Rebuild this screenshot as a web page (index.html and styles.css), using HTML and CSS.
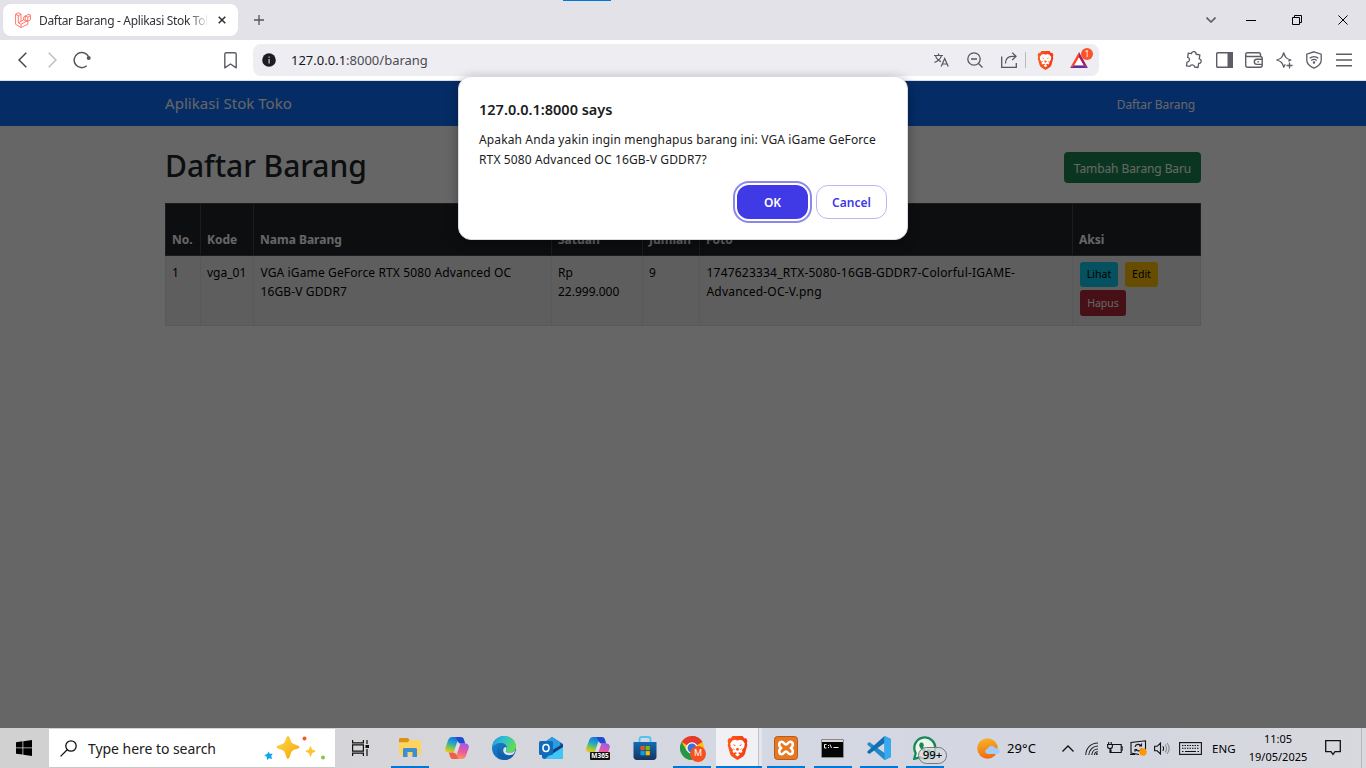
FILE: index.html
```html
<!DOCTYPE html>
<html lang="id">
<head>
<meta charset="utf-8">
<title>Daftar Barang - Aplikasi Stok Toko</title>
<link rel="stylesheet" href="styles.css">
</head>
<body>
<svg class="defs" width="0" height="0">
  <defs>
    <linearGradient id="lion" x1="0" x2="1"><stop offset="0" stop-color="#ff5a1f"/><stop offset="1" stop-color="#f43a10"/></linearGradient>
    <linearGradient id="cpL" x1="0.6" y1="0" x2="0.3" y2="1"><stop offset="0" stop-color="#1b6fe0"/><stop offset=".4" stop-color="#20a5c8"/><stop offset=".7" stop-color="#7fc64b"/><stop offset="1" stop-color="#f3c71c"/></linearGradient>
    <linearGradient id="cpR" x1="0.6" y1="0" x2="0.3" y2="1"><stop offset="0" stop-color="#a657e8"/><stop offset=".5" stop-color="#ee5a9a"/><stop offset="1" stop-color="#ff9a55"/></linearGradient>
    <linearGradient id="edgeA" x1="0" y1="0" x2="1" y2=".4"><stop offset="0" stop-color="#2397dd"/><stop offset=".5" stop-color="#2fc0d0"/><stop offset="1" stop-color="#62dc54"/></linearGradient>
    <linearGradient id="edgeB" x1="0" y1="0" x2="1" y2="1"><stop offset="0" stop-color="#1b8fdc"/><stop offset="1" stop-color="#0c4a94"/></linearGradient>
    <linearGradient id="sun" x1=".3" y1="0" x2=".5" y2="1"><stop offset="0" stop-color="#f6b52b"/><stop offset="1" stop-color="#ee6a10"/></linearGradient>
    <linearGradient id="gold" x1="0" y1="0" x2="1" y2="1"><stop offset="0" stop-color="#ffd84a"/><stop offset="1" stop-color="#f2a60c"/></linearGradient>
    <linearGradient id="store" x1="0" y1="0" x2="0" y2="1"><stop offset="0" stop-color="#0f6cb4"/><stop offset="1" stop-color="#17345f"/></linearGradient>
    <symbol id="braveLion" viewBox="0 0 20 24">
      <path fill="url(#lion)" d="M5 0h10l2 2.400 1.600-.3L20 5l-.7 2 .5 2-2.400 9c-.3 1-1 1.800-1.800 2.400L10 24l-5.600-3.600C3.600 19.800 2.900 19 2.600 18L.2 9l.5-2L0 5l1.400-2.900L3 2.400z"/>
      <path fill="#fff" d="M10 4.600l2.600-.8 2.500.8 2.300 3.200-.6 1.600.2 1.400-2.500 3.300.4 1.700-1.300 1.200-1.800-.8-1.300 1 1.900 1.400L10 20.600l-2.400-2 1.900-1.400-1.300-1-1.800.8-1.300-1.200.4-1.700L3 10.800l.2-1.400-.6-1.600 2.300-3.200 2.500-.8z"/>
      <path fill="#fb5420" d="M5 8.300l3 .7-.5 1.200zM15 8.300l-3 .7.5 1.200zM9 12h2l.5 2L10 14.700 8.500 14zM5.500 12l1.700 1.200-.6 1zM14.500 12l-1.700 1.200.6 1z"/>
    </symbol>
    <symbol id="copilot" viewBox="0 0 24 22">
      <path fill="url(#cpL)" d="M7.500 0h8.300l-3.500 4.500-3.700 11H3.500C1 15.500-.3 13.500.3 11L3 3.500C3.800 1 5.200 0 7.500 0z"/>
      <path fill="url(#cpR)" d="M16.500 22H8.200l3.500-4.500 3.700-11h5.100c2.500 0 3.800 2 3.200 4.500L21 18.500c-.8 2.500-2.200 3.500-4.500 3.500z"/>
      <path fill="#204bd0" d="M10.500 0h5.300c1.600 0 2.600.8 3.100 2.300l1.300 4.200h-3.800c-2-.1-3-.8-3.700-2.100C11.900 2.900 11.600 1.200 10.500 0z"/>
      <path fill="#ee6046" d="M13.500 22H8.200c-1.600 0-2.600-.8-3.100-2.300l-1.300-4.200h3.800c2 .1 3 .8 3.700 2.100.8 1.500 1.100 3.200 2.200 4.400z"/>
      <path fill="#e1dee8" d="M12 7.500h2.700l-2.400 7H9.700z"/>
    </symbol>
  </defs>
</svg>

<header class="tabstrip">
  <div class="tab">
    <svg class="laravel" viewBox="0 0 16 16" fill="none" stroke="#ff6a5e" stroke-width=".9" stroke-linejoin="round"><path d="M.6 2.200L3.300.7 6 2.200v7.100l2.600-1.500V5.200l2.700-1.500L14 2.200l1.500 1v4.600L12.800 9.300v3L6 15.500l-5.400-3.200zM.6 2.200l2.700 1.500L6 2.200M3.300 3.700v7.100L6 12.300l6.800-3.800M6 12.300v3.200M3.300 10.800L6 9.300M10.200 3.700l2.600 1.500 2.700-1.700M12.800 5.200v4.100L10.200 7.700v-4M8.600 7.800l2.700 1.500"/></svg>
    <span class="tab-title">Daftar Barang - Aplikasi Stok Toko</span>
    <svg class="tab-close" viewBox="0 0 8 8" stroke="#2c2d33" stroke-width="1.500"><path d="M.7.7l6.600 6.600M7.300.7L.7 7.300"/></svg>
  </div>
  <svg class="newtab" viewBox="0 0 10 10" stroke="#55565c" stroke-width="1.300"><path d="M5 0v10M0 5h10"/></svg>
  <span class="focus-mark"></span>
  <div class="window-controls">
    <span class="slot chevron"><svg width="10" height="6" viewBox="0 0 10 6" fill="none" stroke="#5c5d63" stroke-width="1.600"><path d="M.5.5L5 5 9.500.5"/></svg></span>
    <span class="slot"><svg width="10" height="1"><rect width="10" height="1"/></svg></span>
    <span class="slot"><svg width="10" height="10" viewBox="0 0 10 10" fill="none" stroke="#000"><path d="M.5 2.500h7v7h-7zM2.500 2.500v-2h7v7h-2"/></svg></span>
    <span class="slot"><svg width="10" height="10" viewBox="0 0 11 11" stroke="#000" stroke-width="1.100"><path d="M.5.5l10 10M10.500.5l-10 10"/></svg></span>
  </div>
</header>

<nav class="toolbar">
  <span class="tool"><svg width="9" height="16" viewBox="0 0 9 16" fill="none" stroke="#45464e" stroke-width="1.500"><path d="M8.300.7L1 8l7.300 7.300"/></svg></span>
  <span class="tool"><svg width="9" height="16" viewBox="0 0 9 16" fill="none" stroke="#bdbdc3" stroke-width="1.500"><path d="M.7.7L8 8 .7 15.300"/></svg></span>
  <span class="tool"><svg width="18" height="18" viewBox="0 0 18 18" fill="none" stroke="#55565e" stroke-width="1.500"><path d="M13.700 14.800A7.600 7.600 0 1 1 15.500 5.500"/><circle cx="15.700" cy="7" r="2" fill="#55565e" stroke="none"/></svg></span>
  <span class="tool bookmark"><svg width="13" height="17" viewBox="0 0 13 17" fill="none" stroke="#5c5d66" stroke-width="1.400" stroke-linejoin="round"><path d="M.8 2.200C.8 1.300 1.400.8 2.300.8h8.400c.9 0 1.500.5 1.500 1.400v13.600L6.500 12 .8 15.800z"/></svg></span>
  <div class="address">
    <svg class="info" viewBox="0 0 14 14"><circle cx="7" cy="7" r="6.800" fill="#1c1d24"/><path d="M6.500 3.400h1.200v1.300H6.500zM6.500 6h1.200v4.500H6.500z" fill="#cfcfd6"/></svg>
    <span class="url"><b>127.0.0.1</b>:8000/barang</span>
    <span class="act"><svg width="15" height="14" viewBox="0 0 15 14" fill="none" stroke="#55565e" stroke-width="1.200"><path d="M0 2.500h9M4.500.5v2M1.500 2.700C2.500 6 5 8 7 8.600M7.500 2.700C6.500 6 3 8.600.5 9.500M7.200 13.500l3.500-8 3.500 8M8.300 11h4.800"/></svg></span>
    <span class="act"><svg width="16" height="16" viewBox="0 0 16 16" fill="none" stroke="#55565e" stroke-width="1.300"><circle cx="7" cy="7" r="6.200"/><path d="M11.500 11.500l4 4M4 7h6"/></svg></span>
    <span class="act"><svg width="16" height="16" viewBox="0 0 16 16" fill="none" stroke="#55565e" stroke-width="1.300"><path d="M.7 4.500v10.800h14.600V11M4.500 11.500C4.500 7 7 4.300 11 4.300h4M11.200.6L15 4.300l-3.800 3.800"/></svg></span>
    <i class="divider"></i>
    <span class="act"><svg width="17" height="19"><use href="#braveLion" width="17" height="19"/></svg></span>
    <span class="act rewards"><svg width="18" height="16" viewBox="0 0 18 16"><path d="M9 0L0 16l4.500-2.700L9 5.500z" fill="#ff4724"/><path d="M9 0l9 16-4.500-2.700L9 5.500z" fill="#9e1f63"/><path d="M0 16h18l-4.500-2.700h-9z" fill="#662d91"/><path d="M9 5.500l4.500 7.800h-9z" fill="#fff"/></svg><em class="count">1</em></span>
  </div>
  <div class="extensions">
    <span class="tool"><svg width="18" height="18" viewBox="0 0 18 18" fill="none" stroke="#5c5d66" stroke-width="1.400" stroke-linejoin="round"><path d="M2.500 3.200h3.400c0-3.200 4.900-3.200 4.900 0h4v4.300c3.200.2 3.200 4.700 0 4.900v4.300h-3.700c-.4-2.600-4.500-2.600-4.900 0H2.500v-4c3-.5 3-4.600 0-5z" transform="rotate(8 9 9) scale(.95)"/></svg></span>
    <span class="tool"><svg width="17" height="16" viewBox="0 0 17 16"><rect x=".7" y=".7" width="15.600" height="14.600" rx="1" fill="none" stroke="#5c5d66" stroke-width="1.400"/><path d="M11.500 0H17v16h-5.500z" fill="#5c5d66"/></svg></span>
    <span class="tool"><svg width="18" height="16" viewBox="0 0 18 16" fill="none" stroke="#5c5d66" stroke-width="1.400"><path d="M15.500 4.500v-2c0-1-.7-1.700-1.700-1.700H2.500C.1.800.1 4.500 2.500 4.500h12.800c1.200 0 1.900.7 1.900 1.800v7c0 1.200-.8 1.900-1.900 1.900H2.600c-1.200 0-1.900-.7-1.900-1.900V2.800M17 7.200h-5.200c-3.300 0-3.300 5.200 0 5.200H17M12.500 9.800h1.300"/></svg></span>
    <span class="tool"><svg width="17" height="17" viewBox="0 0 17 17" fill="none" stroke="#5c5d66" stroke-width="1.300" stroke-linejoin="round"><path d="M9.200 12.300l-1.500 2.900c-1.200-4.400-2.300-5.800-7-7.200 4.700-1.500 5.600-2.500 7-7.200 1.400 4.700 2.500 5.700 7.200 7.200l-2.600 1.200M13.500 10.500v6M10.500 13.500h6"/></svg></span>
    <span class="tool"><svg width="16" height="18" viewBox="0 0 16 18" fill="none" stroke="#5c5d66" stroke-width="1.300"><path d="M8 .8l7.200 2.400v6c0 3.600-2.800 6-7.200 8-4.400-2-7.200-4.400-7.200-8v-6zM3.700 7.300c2.500-2.100 6.100-2.100 8.600 0M5.200 9.500c1.700-1.400 3.900-1.400 5.600 0"/><circle cx="8" cy="11.500" r=".6" fill="#5c5d66"/></svg></span>
    <span class="tool"><svg width="16" height="14" viewBox="0 0 16 14" stroke="#5c5d66" stroke-width="1.400"><path d="M0 1.200h16M0 7h16M0 12.800h16"/></svg></span>
  </div>
</nav>

<main class="viewport">
  <div class="navbar"><div class="container bar">
    <a class="brand">Aplikasi Stok Toko</a><a class="navlink">Daftar Barang</a>
  </div></div>
  <div class="container content">
    <div class="heading"><h1>Daftar Barang</h1><a class="btn add">Tambah Barang Baru</a></div>
    <table>
      <colgroup><col class="c1"><col class="c2"><col class="c3"><col class="c4"><col class="c5"><col class="c6"><col class="c7"></colgroup>
      <thead><tr><th>No.</th><th>Kode</th><th>Nama Barang</th><th>Harga<br>Satuan</th><th>Jumlah</th><th>Foto</th><th>Aksi</th></tr></thead>
      <tbody><tr>
        <td>1</td><td>vga_01</td><td class="name">VGA iGame GeForce RTX 5080 Advanced OC<br>16GB-V GDDR7</td><td>Rp<br>22.999.000</td><td>9</td>
        <td class="photo">1747623334_RTX-5080-16GB-GDDR7-Colorful-IGAME-<br>Advanced-OC-V.png</td>
        <td class="actions-cell"><div class="actions"><a class="btn sm view">Lihat</a><a class="btn sm edit">Edit</a><a class="btn sm delete">Hapus</a></div></td>
      </tr></tbody>
    </table>
  </div>
  <div class="backdrop"></div>
</main>

<section class="dialog">
  <h2>127.0.0.1:8000 says</h2>
  <p>Apakah Anda yakin ingin menghapus barang ini: VGA iGame GeForce<br>RTX 5080 Advanced OC 16GB-V GDDR7?</p>
  <div class="dialog-buttons"><button class="ok">OK</button><button class="cancel">Cancel</button></div>
</section>

<footer class="taskbar">
  <span class="start"><svg width="16" height="16" viewBox="0 0 16 16"><path d="M0 2.200l6.500-.9v6.200H0zM7.300 1.200L16 0v7.500H7.300zM0 8.300h6.500v6.300L0 13.700zM7.300 8.300H16V16l-8.700-1.200z"/></svg></span>
  <div class="search">
    <svg class="lens" viewBox="0 0 17 17" fill="none" stroke="#111" stroke-width="1.300"><circle cx="11" cy="6" r="5.200"/><path d="M7.200 9.800L.6 16.400"/></svg>
    <span class="search-text">Type here to search</span>
    <svg class="sparkles" viewBox="0 0 62 26"><path d="M24 1c1.700 0 2.500 5.300 4 7s7.500 2.200 7.500 4-6 2.500-7.500 4.200-2.300 7.800-4 7.800-2.500-6.100-4-7.800-7.500-2.400-7.500-4.200 6-2.300 7.500-4 2.300-7 4-7z" fill="url(#gold)"/><path d="M46.500 11c.7 0 1 2.800 1.600 3.500s3.400 1 3.400 1.800-2.800 1.200-3.400 1.900-.9 3.600-1.600 3.600-1-2.900-1.600-3.600-3.400-1.100-3.400-1.900 2.800-1.100 3.400-1.800.9-3.500 1.600-3.500z" fill="#fcc62a"/><path d="M4.500 16.500l1.300 2.300 3-.1-1.600 2.400 1 2.800-2.900-.7-2.300 1.700-.2-2.800L.4 20l2.900-.9z" fill="#13a5ec"/><circle cx="40.500" cy="3.500" r="2" fill="#ef5a24"/><circle cx="59" cy="22.500" r="2" fill="#8bc34a"/></svg>
  </div>
  <span class="taskview"><svg width="17" height="16" viewBox="0 0 17 16" fill="none" stroke="#111" stroke-width="1.200"><path d="M.6 0v2.800h10.800V0M.6 16v-2.800h10.800V16M.6 4.800h10.800v6.400H.6zM15 0v4M15 9v7"/><path d="M13.500 5h3.500v3h-3.500z" fill="#111" stroke="none"/></svg></span>
  <div class="apps">
    <span class="app running"><svg width="22" height="20" viewBox="0 0 22 20"><path d="M0 1.500C0 .5.500 0 1.500 0H9l1.500 2v3H0z" fill="#d99314"/><path d="M0 4.200h8.500L11 2h9.500c1 0 1.500.6 1.500 1.500V17H0z" fill="#ffd362"/><path d="M4 19v-7.500C4 10.500 4.600 10 5.500 10h11c.9 0 1.500.5 1.500 1.500V19h-4.500v-5h-5v5z" fill="#3b8ed0"/></svg></span>
    <span class="app"><svg width="24" height="24"><use href="#copilot" width="24" height="22" y="1"/></svg></span>
    <span class="app"><svg width="24" height="24" viewBox="0 0 24 24"><circle cx="12" cy="12" r="12" fill="url(#edgeB)"/><path d="M.1 12C.4 5 6 0 12.200 0 19 0 24 4.900 24 10.500c0 4-3 6.200-6.200 6.200-3 0-4.200-1.200-3.900-2 .5-.8 1-1.500 1-2.800 0-2.800-2.500-4.900-6-4.900C5 7 1.200 9 .1 12z" fill="url(#edgeA)"/><path d="M8.500 9c-2.300 2.300-2 6.500.6 9.300 2.500 2.700 7.200 3.600 12.300 1-1.900 3-5 4.700-9.400 4.700C7 21.500 3 16 8.500 9z" fill="#0f5fae"/><path d="M14 14.700c-.5.600-.2 2 3.800 2 2 0 4-.8 5.300-2.500-.3 2-1.300 3.600-2.300 4.300-4 1.600-8.800.5-9.500-3.200-.5-2.500.9-4.200 2.600-4.300 1 1 .8 2.500.1 3.700z" fill="#dbe4f0"/></svg></span>
    <span class="app"><svg width="24" height="22" viewBox="0 0 24 22"><path d="M3 7L13 0l11 7v13c0 1-.8 2-2 2H6c-2 0-3-1-3-2z" fill="#1465b7"/><path d="M6 5l7-5 8 5v8H6z" fill="#2b9de0"/><path d="M24 8v12c0 1-.8 2-2 2H6l10-9z" fill="#40c6f2"/><path d="M15 12l9-5v3L10 19z" fill="#0e3f80"/><rect x="0" y="4" width="14" height="14" rx="1.500" fill="#0f6cbd"/><ellipse cx="7" cy="11" rx="3" ry="3.500" fill="none" stroke="#fff" stroke-width="1.600"/></svg></span>
    <span class="app m365"><svg width="24" height="24"><use href="#copilot" width="24" height="22" y="1"/></svg><em>M365</em></span>
    <span class="app"><svg width="24" height="24" viewBox="0 0 24 24"><path d="M6.500 6V3.500C6.500 2 7.300 1 8.700 1h6.600c1.400 0 2.200 1 2.200 2.500V6" fill="none" stroke="#4cc5f1" stroke-width="1.800"/><path d="M.5 6h23v14.500c0 2-1.300 3.500-3.200 3.500H3.700c-1.900 0-3.200-1.500-3.200-3.500z" fill="url(#store)"/><path d="M7.500 10h4.200v4.200H7.500z" fill="#f25022"/><path d="M12.600 10h4.200v4.200h-4.200z" fill="#7fba00"/><path d="M7.500 15.100h4.200v4.200H7.500z" fill="#00a4ef"/><path d="M12.600 15.100h4.200v4.200h-4.200z" fill="#ffb900"/></svg></span>
    <span class="app running chrome"><svg width="26" height="26" viewBox="0 0 26 26"><circle cx="12" cy="12" r="12" fill="#fbc116"/><path d="M12 12L1.600 6A12 12 0 0 1 22.400 6z" fill="#e33b2e"/><path d="M12 0a12 12 0 0 1 10.400 6H12z" fill="#e33b2e"/><path d="M1.600 6A12 12 0 0 0 12 24l5.200-9L12 12 6.800 15z" fill="#23964a"/><circle cx="12" cy="12" r="5.800" fill="#fff"/><circle cx="12" cy="12" r="4.500" fill="#3273df"/><circle cx="18" cy="18" r="8" fill="#f4511e"/></svg><em>M</em></span>
    <span class="app running active"><svg width="21" height="24"><use href="#braveLion" width="21" height="24"/></svg></span>
    <span class="app running"><svg width="24" height="24" viewBox="0 0 24 24"><rect x=".5" y=".5" width="23" height="23" rx="3" fill="#e87722" stroke="#b65b1a"/><path d="M7.800 5.800c2.200 0 2.200 2.700 4.200 2.700s2-2.700 4.200-2.700c3 0 3.600 4.200.6 6.200 3 2 2.400 6.200-.6 6.200-2.200 0-2.200-2.700-4.200-2.700s-2 2.700-4.200 2.700c-3 0-3.600-4.200-.6-6.200-3-2-2.400-6.200.6-6.200z" fill="none" stroke="#fff" stroke-width="2.600" stroke-linejoin="round"/></svg></span>
    <span class="app running"><svg width="23" height="19" viewBox="0 0 23 19"><rect x=".5" y=".5" width="22" height="18" rx=".8" fill="#050505" stroke="#8b8b8b"/><path d="M1 1h21v2H1z" fill="#d8d8d8"/><path d="M5.500 5.500h-2v3.500h2M7.500 6v1M7.500 8v1M9 5.500l1.500 3.500M12.500 8.500h5" fill="none" stroke="#eee"/></svg></span>
    <span class="app running code"><svg width="24" height="24" viewBox="0 0 24 24"><path d="M17.500 0L24 3v18l-6.500 3L1 9.300 0 8l2.300-1.900L17.500 17z" fill="#2489ca"/><path d="M17.500 0v7L2.300 18 0 16.200l1-1.400z" fill="#1070b3"/><path d="M17.500 0L24 3v18l-6.500 3z" fill="#37a9ee"/></svg></span>
    <span class="app running whatsapp"><svg width="24" height="24" viewBox="0 0 24 24"><path d="M1.200 22.800l1.500-5.600A10.500 10.500 0 1 1 7 21.300z" fill="#eef3ee" stroke="#168a55" stroke-width="2.300"/><path d="M8 6.500l2 .2 1 3-1 1.300c1 1.700 2 2.700 3.600 3.400l1.400-1.400 2.700 1.300c.3 2-1.500 3-3 2.900-4-.5-8-4.700-8.500-8 0-1 .8-2.500 1.800-2.700z" fill="#168a55"/></svg><em>99+</em></span>
  </div>
  <div class="tray">
    <svg class="weather" width="23" height="21" viewBox="0 0 23 21"><circle cx="10.500" cy="10.500" r="10.300" fill="url(#sun)"/><path d="M11.500 16c-4 0-4.200-4.500-.9-5 1-3.600 5.600-4 7.200-1 1 .1 4.800.3 4.800 3.200 0 1.800-1.300 2.800-3 2.800z" fill="#a5ccfb"/></svg>
    <span class="temp">29°C</span>
    <span class="t up"><svg width="12" height="7" viewBox="0 0 12 7" fill="none" stroke="#111" stroke-width="1.300"><path d="M.5 6.500L6 1l5.500 5.500"/></svg></span>
    <span class="t"><svg width="13" height="13" viewBox="0 0 13 13" fill="none" stroke="#222" stroke-width="1.100"><path d="M.8 13C.8 6 6 1 13 1M3.800 13C4 8 8 4 13 4M6.800 13c.2-3.500 2.700-6 6.200-6M9.500 13c0-2 1.500-3.300 3.500-3.300"/><circle cx="11.800" cy="12" r="1" fill="#222" stroke="none"/></svg></span>
    <span class="t"><svg width="16" height="13" viewBox="0 0 16 13" fill="none" stroke="#111" stroke-width="1.100"><path d="M5.500 2.500h8.700v8H4V7.500M14.500 5H16v3h-1.500M.6 2.500h4.800v2C5.400 6 4.400 6.500 3 6.500S.6 6 .6 4.500zM1.700 0v2.500M4.200 0v2.500M3 6.500v4h1.500"/></svg></span>
    <span class="t"><svg width="17" height="16" viewBox="0 0 17 16" fill="none" stroke="#111" stroke-width="1.100"><path d="M9 14.500L1 13V2.500L15.500.8v9M0 14.500h5M5 7c.5-3 4.500-3.500 6-1.300M11.500 3.500V6H9M11.500 8.500c-1 3-4.500 3-6 1M5 11.800V9.500h2.300"/><circle cx="13" cy="12" r="3.700" fill="#ff9800" stroke="none"/></svg></span>
    <span class="t"><svg width="16" height="13" viewBox="0 0 16 13" fill="none" stroke="#111" stroke-width="1.100"><path d="M.6 4.300h2.600L6.500 1v11L3.200 8.800H.6zM8.800 4.200c1 1.500 1 3.200 0 4.700"/><path d="M11 2.500c2 2.500 2 5.500 0 8M13 1c2.800 3.500 2.800 7.500 0 11" stroke="#888a91"/></svg></span>
    <span class="t kb"><svg width="23" height="13" viewBox="0 0 23 13" fill="none" stroke="#111" stroke-width="1.100"><rect x=".6" y=".6" width="21.800" height="11.800"/><path d="M3 3.500h17M3 6.300h17" stroke-dasharray="1.500 1"/><path d="M3 9.500h1.500M6 9.500h11M18.500 9.500H20"/></svg></span>
    <span class="lang">ENG</span>
    <span class="clock"><span class="time">11:05</span><span class="date">19/05/2025</span></span>
    <span class="notes"><svg width="16" height="16" viewBox="0 0 16 16" fill="none" stroke="#111" stroke-width="1.300"><path d="M.7.7h14.600v11H10L8 14.500 6 11.700H.7z"/></svg></span>
    <i class="peek"></i>
  </div>
</footer>
</body>
</html>
```
FILE: styles.css
```css
* { box-sizing: border-box; }
body { margin: 0; width: 1366px; height: 768px; overflow: hidden; display: flex; flex-direction: column; position: relative; font-family: "Noto Sans", "Open Sans", sans-serif; font-size: 12px; color: #000; }
svg { display: block; flex: none; }
.defs { position: absolute; }
em { font-style: normal; }
span, a { white-space: nowrap; }

.tabstrip { height: 40px; flex: none; background: #e3e2e8; display: flex; align-items: center; padding-left: 3px; position: relative; }
.tab { width: 235px; height: 32px; background: #fff; border-radius: 8px; display: flex; align-items: center; padding-left: 12px; }
.laravel { width: 16px; height: 16px; margin-right: 8px; }
.tab-title { width: 168px; overflow: hidden; font-size: 12px; letter-spacing: -.33px; color: #33343a; -webkit-mask-image: linear-gradient(90deg, #000 150px, transparent 170px); mask-image: linear-gradient(90deg, #000 150px, transparent 170px); }
.tab-close { width: 8px; height: 8px; margin-left: 11px; }
.newtab { width: 10px; height: 10px; margin-left: 16px; }
.focus-mark { position: absolute; left: 563px; top: 0; width: 48px; height: 1px; background: #0078d7; }
.window-controls { display: flex; margin-left: auto; height: 40px; }
.slot { width: 46px; display: flex; align-items: center; justify-content: center; }
.chevron { width: 34px; }

.toolbar { height: 41px; flex: none; background: #fff; border-bottom: 1px solid #dcdce2; display: flex; align-items: center; padding-left: 7px; }
.tool { width: 30px; height: 30px; display: flex; align-items: center; justify-content: center; }
.bookmark { margin: 0 8px 0 118px; }
.address { width: 846px; height: 32px; border-radius: 8px; background: #eeedf2; display: flex; align-items: center; padding-left: 9px; }
.info { width: 14px; height: 14px; }
.url { margin-left: 15px; margin-right: auto; font-size: 13px; color: #4a4b53; }
.url b { font-weight: 400; color: #17181d; }
.act { width: 34px; height: 30px; display: flex; align-items: center; justify-content: center; position: relative; }
.divider { width: 1px; height: 16px; background: #b9b9c0; margin: 0 2px 0 -1px; }
.rewards { width: 37px; padding-right: 3px; }
.count { position: absolute; left: 19px; top: 3px; width: 12px; height: 12px; border-radius: 50%; background: #fb542b; color: #fff; font-size: 8px; line-height: 12px; text-align: center; }
.extensions { display: flex; margin-left: auto; margin-right: 7px; }

.viewport { height: 647px; flex: none; background: #fff; position: relative; }
.backdrop { position: absolute; inset: 0; background: rgba(0, 0, 0, .6); }
.container { width: 1036px; margin: 0 auto; }
.navbar { height: 45px; background: #0d6efd; }
.bar { height: 45px; display: flex; align-items: center; justify-content: space-between; padding-right: 6px; color: #fff; }
.brand { font-size: 15px; letter-spacing: .05px; margin-top: -2px; }
.navlink { font-size: 12px; letter-spacing: -.1px; margin-top: 2px; }
.content { padding-top: 19px; }
.heading { height: 39px; display: flex; align-items: center; justify-content: space-between; margin-bottom: 19px; }
h1 { margin: 2px 0 0; font-size: 30px; line-height: 38px; font-weight: 500; letter-spacing: -.05px; color: #212529; }
.btn { display: flex; align-items: center; justify-content: center; border-radius: 4px; color: #fff; }
.add { width: 137px; height: 31px; margin-top: 5px; padding-top: 2px; letter-spacing: -.1px; background: #198754; }
table { width: 1035px; table-layout: fixed; border-collapse: collapse; }
.c1 { width: 35px; } .c2 { width: 53px; } .c3 { width: 298px; } .c4 { width: 91px; } .c5 { width: 57px; } .c6 { width: 373px; } .c7 { width: 128px; }
th, td { padding: 6px 0 6px 6px; line-height: 19px; text-align: left; vertical-align: top; white-space: nowrap; border: 1px solid #dddfe1; }
thead tr { height: 52px; }
th { background: #212529; color: #fff; border-color: #42474c; vertical-align: bottom; font-weight: 700; }
tbody tr { height: 70px; }
td { background: #ececec; padding-top: 7px; padding-bottom: 5px; }
.name { padding-left: 6.5px; letter-spacing: .13px; }
.photo { padding-left: 6.5px; letter-spacing: .2px; }
.actions-cell { padding-top: 6px; padding-left: 7px; }
.actions { display: flex; flex-wrap: wrap; gap: 3px 7px; width: 90px; }
.sm { height: 25px; font-size: 10.5px; border-radius: 3px; }
.view { width: 38px; background: #0dcaf0; color: #000; }
.edit { width: 33px; background: #ffc107; color: #000; }
.delete { width: 46px; height: 26px; background: #b02a37; }

.dialog { position: absolute; left: 458px; top: 76px; width: 450px; height: 164px; border-radius: 13px; background: #fff; border: 1px solid #dcdbe4; box-shadow: 0 3px 12px rgba(0, 0, 0, .35); padding: 22px 20px 0; }
.dialog h2 { margin: 0; font-size: 14.5px; line-height: 20px; font-weight: 600; color: #1b1c22; }
.dialog p { margin: 11px 0 15px; font-size: 12px; letter-spacing: .13px; line-height: 20px; color: #1b1c22; }
.dialog-buttons { display: flex; justify-content: flex-end; gap: 8px; }
.dialog button { width: 71px; height: 34px; padding: 0; border-radius: 12px; font-family: inherit; font-size: 12px; font-weight: 600; }
.dialog .ok { background: #4039e6; color: #fff; border: 0; outline: 2px solid #8b86f0; outline-offset: 2px; }
.dialog .cancel { background: #fff; color: #4039e6; border: 1px solid #b9b8f5; }

.taskbar { height: 40px; flex: none; display: flex; align-items: center; background: linear-gradient(90deg, #d1d1d2, #d6d6da 30%, #d4d8e3 55%, #d4d6e0 80%, #d8d9de); }
.start { width: 49px; display: flex; justify-content: center; padding-right: 1px; }
.search { width: 286px; height: 39px; align-self: flex-end; background: #fff; border: 1px solid #c9c9c9; border-width: 0 0 1px; display: flex; align-items: center; padding-left: 11px; }
.lens { width: 17px; height: 17px; }
.search-text { margin-left: 11px; font-size: 14px; letter-spacing: -.05px; color: #202020; }
.sparkles { width: 62px; height: 26px; margin-left: auto; margin-right: 9px; }
.taskview { width: 51px; display: flex; justify-content: center; }
.apps { display: flex; }
.app { width: 47px; height: 40px; display: flex; align-items: center; justify-content: center; position: relative; }
.running::after { content: ""; position: absolute; left: 5px; bottom: 0; width: 38px; height: 2px; background: #0078d7; }
.active { background: linear-gradient(90deg, transparent 1px, #f0f0f5 1px 43px, #c0c1c8 43px 44px, #e4e5ed 44px); padding-right: 3px; }
.active::after { left: 1px; width: 46px; }
.m365 em { position: absolute; left: 16px; top: 24px; width: 20px; height: 8px; background: #111; color: #fff; font-size: 6.5px; line-height: 8px; font-weight: 700; text-align: center; border-radius: 1px; }
.chrome { padding-left: 2px; padding-top: 2px; }
.chrome em { position: absolute; left: 22px; top: 17px; width: 16px; height: 16px; color: #fff; font-size: 9px; line-height: 16px; text-align: center; }
.code { padding-right: 1px; }
.code::after { left: 4px; }
.whatsapp { padding-right: 3px; }
.whatsapp::after { left: 3px; }
.whatsapp em { position: absolute; left: 15px; top: 19px; width: 29px; height: 17px; border: 1px solid #777; border-radius: 9px; background: rgba(214, 217, 222, .75); font-size: 11.5px; line-height: 14px; text-align: center; font-weight: 500; }
.tray { margin-left: auto; display: flex; align-items: center; height: 40px; }
.temp { width: 49px; margin-left: 7px; font-size: 13px; letter-spacing: .1px; }
.t { width: 23.5px; display: flex; justify-content: center; }
.up { width: 24px; }
.kb { width: 33px; }
.lang { width: 36px; margin-left: 5px; font-size: 11.5px; }
.clock { width: 60px; display: flex; flex-direction: column; align-items: center; font-size: 11px; line-height: 18px; }
.notes { width: 50px; display: flex; justify-content: center; }
.peek { width: 5px; height: 40px; margin-left: 3px; border-left: 1px solid #b5b6bb; }
```
